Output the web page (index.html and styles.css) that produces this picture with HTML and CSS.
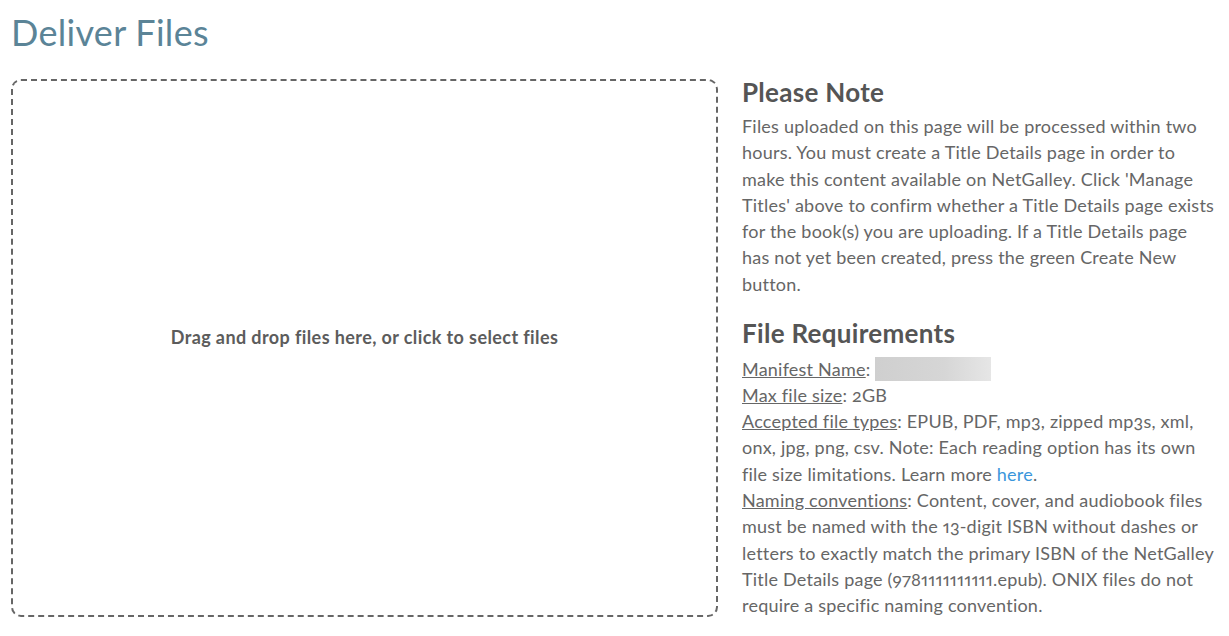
FILE: index.html
```html
<!DOCTYPE html>
<html lang="en">
<head>
<meta charset="utf-8">
<title>Deliver Files</title>
<link rel="stylesheet" href="styles.css">
</head>
<body>
<div class="page">
  <h1 class="page-title">Deliver Files</h1>
  <div class="layout">
    <div class="dropzone">
      <p class="dropzone-text">Drag and drop files here, or click to select files</p>
    </div>
    <aside class="info">
      <h2 class="info-heading">Please Note</h2>
      <p class="info-text">Files uploaded on this page will be processed within two hours. You must create a Title Details page in order to make this content available on NetGalley. Click 'Manage Titles' above to confirm whether a Title Details page exists for the book(s) you are uploading. If a Title Details page has not yet been created, press the green Create New button.</p>
      <h2 class="info-heading req-heading">File Requirements</h2>
      <div class="info-text req-text">
        <div><span class="label">Manifest Name</span>: <span class="redacted"></span></div>
        <div><span class="label">Max file size</span>: 2GB</div>
        <div><span class="label">Accepted file types</span>: EPUB, PDF, mp3, zipped mp3s, xml, onx, jpg, png, csv. Note: Each reading option has its own file size limitations. Learn more <a class="link" href="#">here</a>.</div>
        <div><span class="label">Naming conventions</span>: Content, cover, and audiobook files must be named with the 13-digit ISBN without dashes or letters to exactly match the primary ISBN of the NetGalley Title Details page (9781111111111.epub). ONIX files do not require a specific naming convention.</div>
      </div>
    </aside>
  </div>
</div>
</body>
</html>
```

FILE: styles.css
```css
html, body {
  margin: 0;
  padding: 0;
  background: #ffffff;
}
body {
  font-family: "Lato", "Open Sans", sans-serif;
  color: #666666;
  font-variant-numeric: proportional-nums oldstyle-nums;
}
.page {
  padding: 0 11px;
}
.page-title {
  margin: 0;
  padding-top: 12px;
  height: 79px;
  box-sizing: border-box;
  font-size: 36px;
  font-weight: 400;
  line-height: 40px;
  letter-spacing: 0.3px;
  color: #5b8497;
}
.layout {
  display: grid;
  grid-template-columns: 707px 1fr;
  column-gap: 24px;
}
.dropzone {
  height: 538px;
  box-sizing: border-box;
  padding-bottom: 22px;
  border: 2px dashed #666666;
  border-radius: 10px;
  display: flex;
  align-items: center;
  justify-content: center;
  cursor: pointer;
}
.dropzone-text {
  margin: 0;
  font-size: 18px;
  font-weight: 700;
  letter-spacing: 0.4px;
  color: #5c5c5c;
}
.info-heading {
  margin: 0;
  font-size: 26px;
  font-weight: 700;
  line-height: 26px;
  letter-spacing: 0.3px;
  color: #555555;
}
.req-heading {
  margin-top: 23px;
}
.info-text {
  margin: 8px 0 0;
  font-size: 18px;
  line-height: 26.3px;
  letter-spacing: 0.22px;
  color: #666666;
}
.req-text {
  margin-top: 9.5px;
}
.label {
  text-decoration: underline;
}
.redacted {
  display: inline-block;
  width: 116px;
  height: 24px;
  vertical-align: -5px;
  background: linear-gradient(90deg, #cfcfcf, #d6d6d6 60%, #e6e6e6);
}
.link {
  color: #3a96db;
  text-decoration: none;
}
```
